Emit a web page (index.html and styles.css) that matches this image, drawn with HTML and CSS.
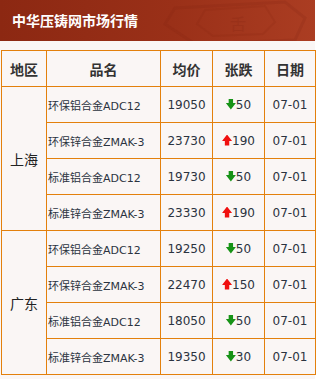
FILE: index.html
```html
<!DOCTYPE html>
<html>
<head>
    <meta charset="utf-8">
    <title>中华压铸网市场行情</title>
    <link rel="stylesheet" href="styles.css">
</head>
<body>
    <div class="panel">
        <div class="banner">
            <h1 class="title">中华压铸网市场行情</h1>
            <svg class="seal" width="180" height="41" viewBox="0 0 180 41">
                <polygon points="40,8 150,2 170,18 160,40 60,44 30,24" fill="none" stroke="#7e2210" stroke-width="3" opacity="0.18"/>
                <polygon points="70,10 130,6 140,22 128,34 78,36 62,24" fill="none" stroke="#7e2210" stroke-width="2" opacity="0.15"/>
                <text x="95" y="30" font-size="16" font-family="Noto Sans CJK SC" fill="#7e2210" opacity="0.2">舌</text>
            </svg>
        </div>

        <table class="quotes">
            <colgroup>
                <col class="c-area">
                <col class="c-name">
                <col class="c-price">
                <col class="c-change">
                <col class="c-date">
            </colgroup>
            <tr class="head">
                <th>地区</th>
                <th>品名</th>
                <th>均价</th>
                <th>张跌</th>
                <th>日期</th>
            </tr>
            <tr>
                <td class="area" rowspan="4">上海</td>
                <td class="name">环保铝合金ADC12</td>
                <td>19050</td>
                <td><span class="down"></span>50</td>
                <td>07-01</td>
            </tr>
            <tr>
                <td class="name">环保锌合金ZMAK-3</td>
                <td>23730</td>
                <td><span class="up"></span>190</td>
                <td>07-01</td>
            </tr>
            <tr>
                <td class="name">标准铝合金ADC12</td>
                <td>19730</td>
                <td><span class="down"></span>50</td>
                <td>07-01</td>
            </tr>
            <tr>
                <td class="name">标准锌合金ZMAK-3</td>
                <td>23330</td>
                <td><span class="up"></span>190</td>
                <td>07-01</td>
            </tr>
            <tr>
                <td class="area" rowspan="4">广东</td>
                <td class="name">环保铝合金ADC12</td>
                <td>19250</td>
                <td><span class="down"></span>50</td>
                <td>07-01</td>
            </tr>
            <tr>
                <td class="name">环保锌合金ZMAK-3</td>
                <td>22470</td>
                <td><span class="up"></span>150</td>
                <td>07-01</td>
            </tr>
            <tr>
                <td class="name">标准铝合金ADC12</td>
                <td>18050</td>
                <td><span class="down"></span>50</td>
                <td>07-01</td>
            </tr>
            <tr>
                <td class="name">标准锌合金ZMAK-3</td>
                <td>19350</td>
                <td><span class="down"></span>30</td>
                <td>07-01</td>
            </tr>
        </table>
    </div>
</body>
</html>
```

FILE: styles.css
```css
body {
    margin: 0;
    background: #fff;
    font-family: "DejaVu Sans", "Noto Sans CJK SC", sans-serif;
    color: #2b3340;
}
.panel {
    width: 315px;
    height: 379px;
    background: #faf6f5;
}
.banner {
    position: relative;
    height: 41px;
    background: linear-gradient(to right, #8c2812, #9a3018 55%, #ab3d22);
    overflow: hidden;
}
.title {
    margin: 0;
    padding: 12px 0 0 12px;
    font-family: "Noto Sans CJK SC", sans-serif;
    font-size: 14px;
    line-height: 17px;
    font-weight: bold;
    color: #fff;
}
.seal {
    position: absolute;
    right: 0;
    top: 0;
}
.quotes {
    margin: 9px 0 0 1px;
    width: 314px;
    table-layout: fixed;
    border-collapse: collapse;
}
.c-area { width: 45px; }
.c-name { width: 114px; }
.c-price { width: 52px; }
.c-change { width: 52px; }
.c-date { width: 51px; }
.quotes th,
.quotes td {
    border: 1px solid #e3800c;
    height: 35px;
    padding: 0;
    text-align: center;
    font-size: 12px;
    white-space: nowrap;
}
.quotes th {
    font-family: "Noto Sans CJK SC", sans-serif;
    font-size: 14px;
    font-weight: bold;
    color: #333;
}
.quotes td.area {
    font-family: "Noto Sans CJK SC", sans-serif;
    font-size: 14px;
    color: #222;
}
.quotes td.name {
    text-align: left;
    padding-left: 1px;
    font-size: 11px;
}
.down,
.up {
    display: inline-block;
    width: 10px;
    height: 11px;
    vertical-align: -1px;
}
.down {
    background: #179317;
    clip-path: polygon(28% 0, 72% 0, 72% 42%, 100% 42%, 50% 100%, 0 42%, 28% 42%);
}
.up {
    background: #f01010;
    clip-path: polygon(50% 0, 100% 58%, 72% 58%, 72% 100%, 28% 100%, 28% 58%, 0 58%);
}
```
